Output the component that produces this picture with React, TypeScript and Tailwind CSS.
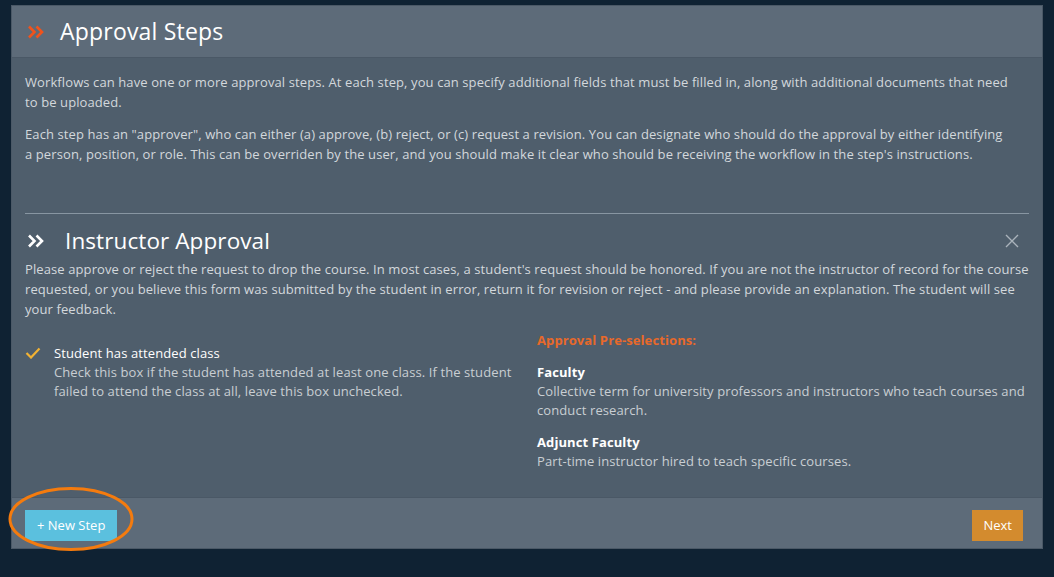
import React from "react";

const Chevrons = ({ color }: { color: string }) => (
  <svg width="18" height="14" viewBox="0 0 18 14" fill="none">
    <path d="M2 1.5 L7.5 7 L2 12.5 M9.5 1.5 L15 7 L9.5 12.5" stroke={color} strokeWidth="2.6" strokeLinecap="butt" strokeLinejoin="miter" />
  </svg>
);

export default function App() {
  const font = { fontFamily: '"Open Sans", "Liberation Sans", sans-serif' };
  return (
    <div className="min-h-screen w-full bg-[#0f2233] pt-[5px] pl-[11px]" style={font}>
      <div className="relative w-[1032px] border border-[#4a5866] bg-[#4f5e6c]">
        {/* header */}
        <div className="flex h-[52px] items-center gap-[15px] border-b border-[#4a5866] bg-[#5d6b79] pl-[15px]">
          <Chevrons color="#f0531c" />
          <h1 className="text-[23px] leading-none tracking-[0.2px] text-white">Approval Steps</h1>
        </div>
        {/* body */}
        <div className="px-[13px] pt-[14px] pb-[26px] text-[13px] leading-[20px] tracking-[0.1px] text-[#d3d8dc]">
          <p className="whitespace-nowrap">
            Workflows can have one or more approval steps. At each step, you can specify additional fields that must be filled in, along with additional documents that need
            <br />
            to be uploaded.
          </p>
          <p className="mt-[12px] whitespace-nowrap">
            Each step has an "approver", who can either (a) approve, (b) reject, or (c) request a revision. You can designate who should do the approval by either identifying
            <br />
            a person, position, or role. This can be overriden by the user, and you should make it clear who should be receiving the workflow in the step's instructions.
          </p>
          <div className="mt-[49px] border-t border-[#8896a2]" />
          <div className="mt-[13px] flex h-[28px] items-center pl-[2px] pr-[10px]">
            <Chevrons color="#ffffff" />
            <h2 className="ml-[20px] text-[22.5px] leading-none text-white">Instructor Approval</h2>
            <svg className="ml-auto" width="14" height="14" viewBox="0 0 14 14" fill="none">
              <path d="M1 1 L13 13 M13 1 L1 13" stroke="#aab3bb" strokeWidth="1.4" />
            </svg>
          </div>
          <p className="mt-[4px] whitespace-nowrap">
            Please approve or reject the request to drop the course. In most cases, a student's request should be honored. If you are not the instructor of record for the course
            <br />
            requested, or you believe this form was submitted by the student in error, return it for revision or reject - and please provide an explanation. The student will see
            <br />
            your feedback.
          </p>
          <div className="mt-[12px] grid grid-cols-2 gap-x-[20px] leading-[19px]">
            <div className="flex items-start gap-[13px] pt-[13px]">
              <svg className="mt-[3px] shrink-0" width="16" height="12" viewBox="0 0 16 12" fill="none">
                <path d="M1.5 6 L6 10.5 L14.5 1.5" stroke="#f2b233" strokeWidth="2.2" />
              </svg>
              <div>
                <div className="text-white">Student has attended class</div>
                <div className="text-[#c9ced3]">
                  Check this box if the student has attended at least one class. If the student failed to attend the class at all, leave this box unchecked.
                </div>
              </div>
            </div>
            <div>
              <div className="font-bold text-[#e8692a]">Approval Pre-selections:</div>
              <div className="mt-[13px] font-bold text-white">Faculty</div>
              <div className="text-[#c9ced3]">
                Collective term for university professors and instructors who teach courses and conduct research.
              </div>
              <div className="mt-[13px] font-bold text-white">Adjunct Faculty</div>
              <div className="text-[#c9ced3]">Part-time instructor hired to teach specific courses.</div>
            </div>
          </div>
        </div>
        {/* footer */}
        <div className="relative flex h-[51px] items-start justify-between border-t border-[#4a5866] bg-[#5d6b79] pl-[13px] pr-[19px] pt-[12px]">
          <button className="h-[31px] bg-[#5bc0de] px-[12px] text-[13px] text-white">+ New Step</button>
          <button className="h-[31px] bg-[#d38b2e] px-[11px] text-[13px] text-white">Next</button>
          <svg className="pointer-events-none absolute left-[-6px] top-[-11px]" width="130" height="64" viewBox="0 0 130 64" fill="none">
            <ellipse cx="65" cy="32" rx="61" ry="30.5" stroke="#f47b0e" strokeWidth="3" />
          </svg>
        </div>
      </div>
    </div>
  );
}
